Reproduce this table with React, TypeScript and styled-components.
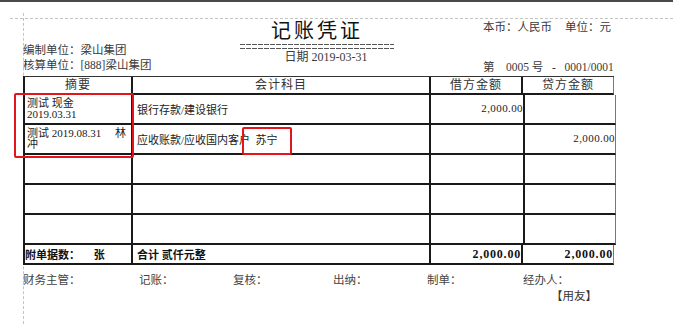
import styled, { createGlobalStyle } from "styled-components";

const GlobalStyle = createGlobalStyle`
  html, body {
    margin: 0;
    padding: 0;
    background: #fff;
  }
  body {
    font-family: "Liberation Serif", "Noto Sans CJK SC", serif;
    color: #222;
  }
  * {
    box-sizing: border-box;
  }
`;

interface EntryRow {
  summary: React.ReactNode;
  account: string;
  debit?: string;
  credit?: string;
}

const rows: EntryRow[] = [
  {
    summary: (
      <>
        测试 现金
        <br />
        2019.03.31
      </>
    ),
    account: "银行存款/建设银行",
    debit: "2,000.00",
  },
  {
    summary: "测试 2019.08.31     林冲",
    account: "应收账款/应收国内客户  苏宁",
    credit: "2,000.00",
  },
  { summary: "", account: "" },
  { summary: "", account: "" },
  { summary: "", account: "" },
];

const signers = ["财务主管：", "记账：", "复核：", "出纳：", "制单：", "经办人："];

export default function App() {
  return (
    <Screen>
      <GlobalStyle />
      <HGuide />
      <VGuide />

      <Voucher>
        <Header>
          <LeftInfo>
            <div>编制单位：梁山集团</div>
            <div>核算单位：[888]梁山集团</div>
          </LeftInfo>
          <CenterInfo>
            <Title>记账凭证</Title>
            <DoubleRule />
            <DateLine>日期 2019-03-31</DateLine>
          </CenterInfo>
          <RightInfo>
            <Currency>
              <span>本币：人民币</span>
              <span>单位：元</span>
            </Currency>
            <Serial>{"第    0005 号   -   0001/0001"}</Serial>
          </RightInfo>
        </Header>

        <Grid>
          <HeadCell>摘要</HeadCell>
          <HeadCell>会计科目</HeadCell>
          <HeadCell>借方金额</HeadCell>
          <HeadCell $last>贷方金额</HeadCell>

          {rows.map((row, i) => (
            <Row key={i}>
              <SummaryCell>{row.summary}</SummaryCell>
              <AccountCell>{row.account}</AccountCell>
              <AmountCell>{row.debit}</AmountCell>
              <AmountCell $last>{row.credit}</AmountCell>
            </Row>
          ))}

          <TotalCell>{"附单据数：     张"}</TotalCell>
          <TotalCell $pad>合计 贰仟元整</TotalCell>
          <TotalCell $right>2,000.00</TotalCell>
          <TotalCell $right $last>
            2,000.00
          </TotalCell>
        </Grid>

        <Signers>
          {signers.map((s) => (
            <span key={s}>{s}</span>
          ))}
        </Signers>
        <Brand>【用友】</Brand>
      </Voucher>

      <Mark $x={14} $y={91} $w={120} $h={65} />
      <Mark $x={242} $y={125} $w={50} $h={28} />
    </Screen>
  );
}

const Screen = styled.div`
  position: relative;
  width: 673px;
  height: 324px;
  overflow: hidden;
  background: #fff;
  border-top: 2px solid #4a4a4a;
`;

const HGuide = styled.div`
  position: absolute;
  top: 16px;
  left: 10px;
  right: 0;
  border-top: 1px dashed #c4c4c4;
`;

const VGuide = styled.div`
  position: absolute;
  top: 11px;
  bottom: 0;
  left: 23px;
  border-left: 1px dashed #c4c4c4;
`;

const Voucher = styled.div`
  position: relative;
  z-index: 1;
  width: 614px;
  padding-left: 23px;
`;

const Header = styled.header`
  display: grid;
  grid-template-columns: 217px 154px 1fr;
  height: 74px;
  font-size: 11.5px;
  color: #3a3a3a;
`;

const LeftInfo = styled.div`
  display: flex;
  flex-direction: column;
  justify-content: flex-end;
  padding-bottom: 3px;
  line-height: 15px;
`;

const CenterInfo = styled.div`
  padding-top: 17px;
`;

const Title = styled.h1`
  margin: 0;
  font-size: 20px;
  font-weight: 400;
  line-height: 24px;
  letter-spacing: 3px;
  text-align: center;
  color: #111;
`;

const DoubleRule = styled.div`
  height: 5px;
  margin: 1px 0 1px;
  background:
    repeating-linear-gradient(90deg, #555 0 5px, transparent 5px 6px) top / 100% 1px no-repeat,
    repeating-linear-gradient(90deg, #555 0 5px, transparent 5px 6px) bottom / 100% 1px no-repeat;
`;

const DateLine = styled.div`
  padding-left: 18px;
  font-size: 12px;
  line-height: 14px;
  text-align: center;
`;

const RightInfo = styled.div`
  display: flex;
  flex-direction: column;
  justify-content: space-between;
  padding: 18px 0 2px 89px;
  line-height: 14px;
`;

const Currency = styled.div`
  display: flex;
  gap: 13px;
`;

const Serial = styled.div`
  white-space: pre;
`;

const Grid = styled.div`
  display: grid;
  grid-template-columns: 108px 298px 92px 91px;
  grid-template-rows: 18px repeat(5, 30px) 20px;
  width: 591px;
  border-top: 1px solid #333;
  border-left: 2px solid #1a1a1a;
`;

const Row = styled.div`
  display: contents;
`;

const Cell = styled.div<{ $last?: boolean }>`
  border-bottom: 2px solid #1a1a1a;
  border-right: ${(p) => (p.$last ? "1px solid #777" : "2px solid #1a1a1a")};
  font-size: 11px;
  color: #222;
`;

const HeadCell = styled(Cell)`
  display: flex;
  align-items: center;
  justify-content: center;
  font-size: 12px;
  letter-spacing: 1px;
  color: #333;
  line-height: 14px;
`;

const SummaryCell = styled(Cell)`
  padding: 3px 2px 0 2px;
  line-height: 11px;
  white-space: pre-wrap;
`;

const AccountCell = styled(Cell)`
  display: flex;
  align-items: center;
  padding-left: 4px;
  white-space: pre;
`;

const AmountCell = styled(Cell)`
  display: flex;
  align-items: center;
  justify-content: flex-end;
  padding-bottom: 2px;
  margin-right: -2px;
  letter-spacing: 0.4px;
`;

const TotalCell = styled(Cell)<{ $right?: boolean; $pad?: boolean }>`
  display: flex;
  align-items: center;
  justify-content: ${(p) => (p.$right ? "flex-end" : "flex-start")};
  padding-left: ${(p) => (p.$pad ? "4px" : "0")};
  font-size: ${(p) => (p.$right ? "12px" : "11px")};
  letter-spacing: ${(p) => (p.$right ? "0.8px" : "0")};
  font-weight: 700;
  color: #111;
  white-space: pre;
`;

const Signers = styled.div`
  display: grid;
  grid-template-columns: 116px 94px 100px 94px 96px 1fr;
  padding-top: 8px;
  font-size: 11.5px;
  line-height: 14px;
  color: #444;
`;

const Brand = styled.div`
  display: flex;
  justify-content: flex-end;
  padding-right: 17px;
  margin-top: 2px;
  font-size: 11.5px;
  line-height: 14px;
  color: #333;
`;

const Mark = styled.div<{ $x: number; $y: number; $w: number; $h: number }>`
  position: absolute;
  z-index: 2;
  left: ${(p) => p.$x}px;
  top: ${(p) => p.$y}px;
  width: ${(p) => p.$w}px;
  height: ${(p) => p.$h}px;
  border: 2px solid #e3151a;
  border-radius: 2px;
`;
